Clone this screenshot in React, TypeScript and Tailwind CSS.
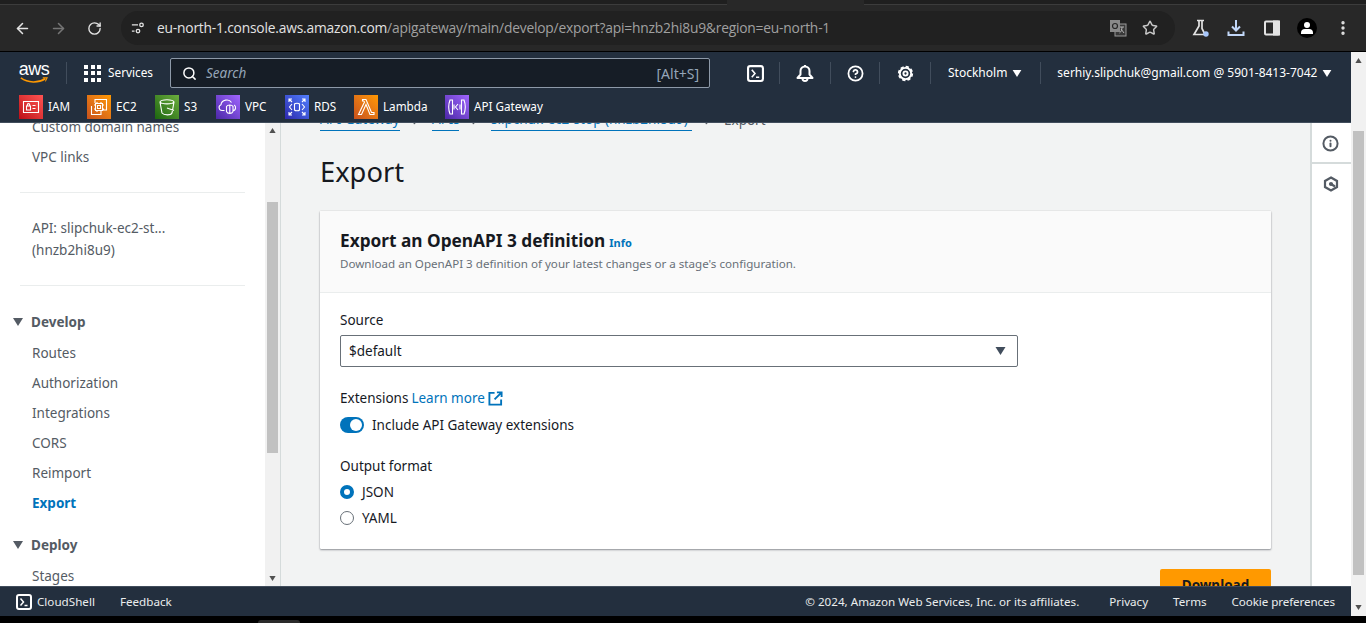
import { ArrowLeft, ArrowRight, RotateCw, Star, EllipsisVertical, Search, CircleHelp, Info, ChevronRight } from "lucide-react";

const FONT = "font-['Noto_Sans','Open_Sans',sans-serif]";

const SHORTCUTS = [
  { label: "IAM", bg: "from-[#bd0816] to-[#ff5252]", d: "M4.500 6.500h15v11h-15z M7.500 11h4v4h-4z M8.300 11V9.800a1.200 1.200 0 0 1 2.400 0V11 M13.500 10.500h3 M13.500 13.500h3", w: "w-[68px]" },
  { label: "EC2", bg: "from-[#c8511b] to-[#ff9900]", d: "M8 8V4.500h11.500V15H16 M4.500 11v8.500H14V16 M8.500 8.500h7v7h-7z M10.500 10.500h3v3h-3z M10 7v1.500 M14 7v1.500 M10 15.500V17 M14 15.500V17 M7 10h1.500 M7 14h1.500 M15.500 10H17 M15.500 14H17", w: "w-[68px]" },
  { label: "S3", bg: "from-[#1b660f] to-[#6cae3e]", d: "M5 7c1-3 13-3 14 0l-2 11c-1 2.500-8 2.500-10 0z M5 7c2 2.500 12 2.500 14 0 M12 13l7 2.500", w: "w-[61px]" },
  { label: "VPC", bg: "from-[#4d27a8] to-[#a166ff]", d: "M8.500 15.500H6a3 3 0 0 1-1-5.800c.5-5 8-6.500 10.500-2.200 M18 10c2.500 1 2 5.500-1 5.500 M10.500 11.500c1-2 5.500-2 6.500 0v5c-1 2.500-5.500 2.500-6.500 0z M13.800 9.500v9", w: "w-[69px]" },
  { label: "RDS", bg: "from-[#2e27ad] to-[#527fff]", d: "M9.500 9c1-1 4-1 5 0v6c-1 1-4 1-5 0z M7 9l-2.500 3L7 15 M17 9l2.500 3L17 15 M4 7V4h3 M20 7V4h-3 M4 17v3h3 M20 17v3h-3 M4 4l3 3 M20 4l-3 3 M4 20l3-3 M20 20l-3-3", w: "w-[69px]" },
  { label: "Lambda", bg: "from-[#c8511b] to-[#ff9900]", d: "M8.500 4.500h3.500l5.500 13h2.500v2h-4l-4-10-4.500 10H4.500l6-12.500-.8-1H8.500z", w: "w-[91px]" },
  { label: "API Gateway", bg: "from-[#4d27a8] to-[#a166ff]", d: "M5 5h2.500v14H5c-1.500-4-1.500-10 0-14z M19 5h-2.500v14H19c1.500-4 1.500-10 0-14z M13 9l-2.500 3 2.500 3 M9 9.500v5 M15 9.500v5", w: "" },
];

const DEVELOP = ["Routes", "Authorization", "Integrations", "CORS", "Reimport"];

function TerminalIcon({ className }: { className: string }) {
  return (
    <svg viewBox="0 0 16 16" fill="none" className={className}>
      <rect x="1" y="1" width="14" height="14" rx="2" stroke="white" strokeWidth="2" />
      <path d="M4.500 4.500 7.500 8l-3 3.500M8.500 11.500h3" stroke="white" strokeWidth="1.500" />
    </svg>
  );
}

function Caret({ className }: { className: string }) {
  return (
    <svg viewBox="0 0 10 8" className={className}>
      <path d="M0 0h10L5 8z" fill="currentColor" />
    </svg>
  );
}

function Divider({ className }: { className: string }) {
  return <div className={`w-px h-[22px] bg-[#414d5c] ${className}`} />;
}

function Scrollbar({ width, thumbTop, thumbHeight, arrowPad }: { width: string; thumbTop: string; thumbHeight: string; arrowPad: string }) {
  return (
    <div className={`${width} shrink-0 bg-[#f1f1f1] flex flex-col items-center ${arrowPad}`}>
      <Caret className="w-[9px] h-[5px] text-[#505050] rotate-180 shrink-0" />
      <div className={`w-full px-[2px] grow ${thumbTop}`}>
        <div className={`${thumbHeight} bg-[#c1c1c1]`} />
      </div>
      <Caret className="w-[9px] h-[5px] text-[#505050] shrink-0" />
    </div>
  );
}

function BrowserBar() {
  return (
    <div className="h-[52px] shrink-0 bg-[#1f1f1f] flex flex-col">
      <div className="h-[5px] flex">
        <div className="w-[727px] border-b border-[#3c3c3c]" />
        <div className="w-[137px] bg-[#282828]" />
        <div className="grow border-b border-[#3c3c3c] bg-[#1f1f1f]" />
      </div>
      <div className="grow bg-[#282828] flex items-center border-b border-black">
        <ArrowLeft className="ml-[14px] w-[17px] h-[17px] text-[#e3e3e3]" strokeWidth={2.2} />
        <ArrowRight className="ml-[19px] w-[17px] h-[17px] text-[#757575]" strokeWidth={2.2} />
        <RotateCw className="ml-[20px] w-[15px] h-[15px] text-[#e3e3e3]" strokeWidth={2.2} />
        <div className="ml-[19px] w-[1054px] h-[34px] rounded-full bg-[#212121] flex items-center pl-[10px] pr-[17px]">
          <svg viewBox="0 0 16 16" fill="none" className="w-[14px] h-[14px] text-[#e3e3e3] shrink-0" stroke="currentColor" strokeWidth="1.500">
            <path d="M1 4.500h7M1 11.500h3" />
            <circle cx="12" cy="4.500" r="2" />
            <circle cx="8" cy="11.500" r="2" />
          </svg>
          <span className="ml-[12px] font-['Open_Sans',sans-serif] text-[13.800px] tracking-[-0.2px] text-[#e3e3e3] whitespace-nowrap">
            eu-north-1.console.aws.amazon.com<span className="text-[#a0a0a0]">/apigateway/main/develop/export?api=hnzb2hi8u9&amp;region=eu-north-1</span>
          </span>
          <svg viewBox="0 0 18 18" className="ml-auto w-[18px] h-[18px]">
            <rect x="6" y="5" width="11" height="12" fill="#3a3a3a" stroke="#9a9a9a" strokeWidth="1" />
            <rect x="1" y="1" width="10" height="12" fill="#8a8a8a" />
            <circle cx="6" cy="7" r="2.500" fill="none" stroke="#282828" strokeWidth="1.200" />
            <path d="M11 8h4M13 8c0 3-1 5-2.500 6M12 10l3 4" fill="none" stroke="#b5b5b5" strokeWidth="1" />
          </svg>
          <Star className="ml-[15px] w-[16px] h-[16px] text-[#c7c7c7]" strokeWidth={2.2} />
        </div>
        <svg viewBox="0 0 18 18" fill="none" className="ml-[17px] w-[18px] h-[18px] text-[#e3e3e3]" stroke="currentColor" strokeWidth="1.700">
          <path d="M5 1.500h7M7 1.500v5.500L2 15.500h11L10 9.500V1.500" />
          <circle cx="14" cy="15" r="2.700" fill="#a8c7fa" stroke="none" />
        </svg>
        <svg viewBox="0 0 18 18" fill="none" className="ml-[17px] w-[18px] h-[18px] text-[#c2d7f8]" stroke="currentColor" strokeWidth="2">
          <path d="M9 1v10M5 7.500l4 4 4-4M1.500 12.500v3.500h15v-3.500" />
        </svg>
        <svg viewBox="0 0 16 16" className="ml-[19px] w-[16px] h-[16px] text-[#e3e3e3]" fill="none" stroke="currentColor" strokeWidth="2">
          <rect x="1" y="1.500" width="14" height="13" rx="1" />
          <path d="M10 1.500v13h5v-13z" fill="currentColor" />
        </svg>
        <div className="ml-[17px] w-[20px] h-[20px] rounded-full bg-black flex flex-col items-center justify-center">
          <div className="w-[6px] h-[6px] rounded-full bg-white" />
          <div className="w-[12px] h-[5px] mt-px rounded-t-[4px] bg-white" />
        </div>
        <EllipsisVertical className="ml-[17px] w-[18px] h-[18px] text-[#e3e3e3]" strokeWidth={2.5} />
      </div>
    </div>
  );
}

function TopNav() {
  return (
    <div className="h-[71px] shrink-0 bg-[#232f3e] text-white border-b border-[#414d5c]">
      <div className="h-[41px] flex items-center pt-px">
        <div className="ml-[18px] w-[32px] flex flex-col items-center leading-none">
          <span className="font-['Liberation_Sans',sans-serif] text-[18px] leading-[15px] tracking-[-0.5px]">aws</span>
          <svg viewBox="0 0 32 8" className="w-[32px] h-[7px]" fill="none">
            <path d="M1 1c8 6 20 6 28 1" stroke="#ff9900" strokeWidth="1.800" />
            <path d="M26 1h5l-2 4" stroke="#ff9900" strokeWidth="1.200" />
          </svg>
        </div>
        <Divider className="ml-[16px]" />
        <div className="ml-[17px] grid grid-cols-3 gap-[2.500px] w-[17px]">
          {Array.from({ length: 9 }).map((_, i) => (
            <div key={i} className="w-[4px] h-[4px] bg-white" />
          ))}
        </div>
        <span className="ml-[7px] text-[11.800px]">Services</span>
        <div className="ml-[17px] w-[540px] h-[30px] rounded-[2px] border border-[#8d99a8] bg-[#161d26] flex items-center pl-[11px] pr-[10px]">
          <Search className="w-[15px] h-[15px] text-white" strokeWidth={2.4} />
          <span className="ml-[9px] italic text-[13.500px] text-[#95a5b8]">Search</span>
          <span className="ml-auto text-[14px] text-[#95a5b8]">[Alt+S]</span>
        </div>
        <TerminalIcon className="ml-[37px] w-[17px] h-[17px]" />
        <Divider className="ml-[15px]" />
        <svg viewBox="0 0 18 18" fill="none" stroke="white" strokeWidth="2" className="ml-[16px] w-[18px] h-[18px]">
          <path d="M1.500 14 4.500 10.500V7a4.500 4.500 0 0 1 9 0v3.500L16.500 14z" strokeLinejoin="round" />
          <path d="M6.500 14.500a2.500 2.500 0 0 0 5 0" />
          <path d="M9 1v1.500" />
        </svg>
        <Divider className="ml-[16px]" />
        <CircleHelp className="ml-[16px] w-[17px] h-[17px]" strokeWidth={2.5} />
        <Divider className="ml-[15px]" />
        <svg viewBox="0 0 18 18" fill="none" stroke="white" className="ml-[17px] w-[17px] h-[17px]">
          <circle cx="9" cy="9" r="6" strokeWidth="2" />
          <circle cx="9" cy="9" r="7.200" strokeWidth="1.800" strokeDasharray="3.500 2.150" />
          <circle cx="9" cy="9" r="2.200" strokeWidth="2" />
        </svg>
        <Divider className="ml-[16px]" />
        <span className="ml-[17px] text-[12px]">Stockholm</span>
        <Caret className="ml-[5px] w-[10px] h-[7px]" />
        <Divider className="ml-[18px]" />
        <span className="ml-[16px] text-[12px] whitespace-nowrap">serhiy.slipchuk@gmail.com @ 5901-8413-7042</span>
        <Caret className="ml-[5px] w-[10px] h-[7px]" />
      </div>
      <div className="h-[29px] flex items-start pl-[19px] pt-[2px]">
        {SHORTCUTS.map((s) => (
          <div key={s.label} className={`flex items-center gap-[5px] ${s.w}`}>
            <div className={`w-[24px] h-[24px] bg-gradient-to-tr ${s.bg}`}>
              <svg viewBox="0 0 24 24" fill="none" stroke="white" strokeWidth="1.100" className="w-[24px] h-[24px]">
                <path d={s.d} />
              </svg>
            </div>
            <span className="text-[11.700px]">{s.label}</span>
          </div>
        ))}
      </div>
    </div>
  );
}

function SideNav() {
  return (
    <div className="w-[265px] shrink-0 bg-white overflow-hidden text-[13.500px] text-[#545b64]">
      <div className="-mt-[6px] pl-[32px] pr-[20px]">
        <div className="h-[20px] flex items-center">Custom domain names</div>
        <div className="h-[20px] mt-[10px] flex items-center">VPC links</div>
      </div>
      <div className="mx-[20px] mt-[25px] h-px bg-[#eaeded]" />
      <div className="pl-[32px] mt-[24px] leading-[22px]">
        <div>API: slipchuk-ec2-st...</div>
        <div>(hnzb2hi8u9)</div>
      </div>
      <div className="mx-[20px] mt-[24px] h-px bg-[#eaeded]" />
      <div className="mt-[26px] h-[20px] pl-[13px] flex items-center font-bold">
        <Caret className="w-[10px] h-[8px] mr-[8px]" />
        Develop
      </div>
      <div className="pl-[32px] mt-[11px] flex flex-col gap-[10px]">
        {DEVELOP.map((d) => (
          <div key={d} className="h-[20px] flex items-center">{d}</div>
        ))}
        <div className="h-[20px] flex items-center font-bold text-[#0073bb]">Export</div>
      </div>
      <div className="mt-[22px] h-[20px] pl-[13px] flex items-center font-bold">
        <Caret className="w-[10px] h-[8px] mr-[8px]" />
        Deploy
      </div>
      <div className="pl-[32px] mt-[11px] h-[20px] flex items-center">Stages</div>
    </div>
  );
}

function ExportCard() {
  return (
    <div className="w-[951px] bg-white rounded-[1px] shadow-[0_1px_2px_rgba(0,7,22,0.4),0_0_1px_rgba(0,7,22,0.3)]">
      <div className="h-[82px] bg-[#fafafa] border-b border-[#eaeded] pl-[20px] pt-[17px]">
        <div className="flex items-baseline gap-[4px]">
          <span className="text-[17.250px] leading-[26px] font-bold text-[#16191f]">Export an OpenAPI 3 definition</span>
          <span className="text-[11px] font-bold text-[#0073bb]">Info</span>
        </div>
        <div className="text-[11.600px] leading-[16px] mt-[2px] text-[#687078]">Download an OpenAPI 3 definition of your latest changes or a stage's configuration.</div>
      </div>
      <div className="h-[256px] pl-[20px] pt-[17px] text-[13.500px] text-[#16191f]">
        <div className="leading-[20px]">Source</div>
        <div className="mt-[5px] w-[678px] h-[32px] rounded-[2px] border border-[#687078] flex items-center pl-[8px] pr-[11px]">
          <span>$default</span>
          <Caret className="ml-auto w-[11px] h-[8px] text-[#414d5c]" />
        </div>
        <div className="mt-[21px] h-[20px] flex items-center gap-[3px]">
          <span>Extensions</span>
          <span className="text-[#0073bb]">Learn more</span>
          <svg viewBox="0 0 16 16" fill="none" stroke="#0073bb" strokeWidth="2" className="w-[15px] h-[15px]">
            <path d="M7 2H1.500v12.500H14V9" />
            <path d="M9.500 1.500H14.500V6.500M14 2 7 9" />
          </svg>
        </div>
        <div className="mt-[7px] h-[20px] flex items-center">
          <div className="w-[24px] h-[16px] rounded-full bg-[#0073bb] flex items-center justify-end pr-[2px]">
            <div className="w-[12px] h-[12px] rounded-full bg-white" />
          </div>
          <span className="ml-[8px]">Include API Gateway extensions</span>
        </div>
        <div className="mt-[21px] leading-[20px]">Output format</div>
        <div className="mt-[6px] h-[20px] flex items-center">
          <div className="w-[14px] h-[14px] rounded-full border-[4px] border-[#0073bb] bg-white" />
          <span className="ml-[8px]">JSON</span>
        </div>
        <div className="mt-[6px] h-[20px] flex items-center">
          <div className="w-[14px] h-[14px] rounded-full border border-[#687078] bg-white" />
          <span className="ml-[8px]">YAML</span>
        </div>
      </div>
    </div>
  );
}

function Main() {
  return (
    <div className="grow min-w-0 bg-[#f2f3f3] overflow-hidden pl-[39px]">
      <div className="-mt-[13px] h-[20px] flex items-center text-[13.500px] text-[#545b64] whitespace-nowrap">
        <span className="w-[80px] text-[#0073bb] border-b border-[#0073bb]">API Gateway</span>
        <span className="w-[32px] flex justify-center"><ChevronRight className="w-[14px] h-[14px]" strokeWidth={2.4} /></span>
        <span className="w-[27px] text-[#0073bb] border-b border-[#0073bb]">APIs</span>
        <span className="w-[32px] flex justify-center"><ChevronRight className="w-[14px] h-[14px]" strokeWidth={2.4} /></span>
        <span className="w-[201px] text-[#0073bb] border-b border-[#0073bb]">slipchuk-ec2-stop (hnzb2hi8u9)</span>
        <span className="w-[32px] flex justify-center"><ChevronRight className="w-[14px] h-[14px]" strokeWidth={2.4} /></span>
        <span>Export</span>
      </div>
      <h1 className="mt-[24px] text-[27.300px] leading-[36px] text-[#16191f]">Export</h1>
      <div className="mt-[21px]">
        <ExportCard />
      </div>
      <div className="mt-[20px] w-[951px] flex justify-end">
        <div className="w-[111px] h-[32px] rounded-[2px] bg-[#ff9900] flex items-center justify-center text-[13.500px] font-bold text-[#16191f]">Download</div>
      </div>
    </div>
  );
}

function RightRail() {
  return (
    <div className="w-[41px] shrink-0 bg-white border-l-2 border-[#d5dbdb] flex flex-col text-[#545b64]">
      <div className="h-[41px] border-b-2 border-[#d5dbdb] flex items-center justify-center pr-[2px] pt-px">
        <Info className="w-[17px] h-[17px]" strokeWidth={2.8} />
      </div>
      <div className="mt-[12px] flex justify-center pr-[2px]">
        <svg viewBox="0 0 16 16" fill="none" stroke="currentColor" strokeWidth="2.200" className="w-[16px] h-[16px]">
          <path d="M8 1.500 14 5v6l-6 3.500L2 11V5z" />
          <circle cx="8" cy="8" r="1" fill="currentColor" />
          <path d="M8 8l4 2.500" />
        </svg>
      </div>
    </div>
  );
}

function Footer() {
  return (
    <div className="h-[30px] shrink-0 bg-[#232f3e] border-t border-[#414d5c] flex items-center text-[11.650px] text-[#eaeded] pr-[16px]">
      <TerminalIcon className="ml-[16px] w-[16px] h-[16px]" />
      <span className="ml-[5px]">CloudShell</span>
      <span className="ml-[25px]">Feedback</span>
      <span className="ml-auto">© 2024, Amazon Web Services, Inc. or its affiliates.</span>
      <span className="ml-[30px]">Privacy</span>
      <span className="ml-[25px]">Terms</span>
      <span className="ml-[25px] tracking-[-0.1px]">Cookie preferences</span>
    </div>
  );
}

export default function App() {
  return (
    <div className={`h-[623px] w-[1366px] overflow-hidden flex flex-col bg-black ${FONT}`}>
      <BrowserBar />
      <div className="h-[564px] flex shrink-0">
        <div className="w-[1351px] shrink-0 flex flex-col">
          <TopNav />
          <div className="grow min-h-0 flex">
            <SideNav />
            <Scrollbar width="w-[15px]" thumbTop="mt-[69px]" thumbHeight="h-[251px]" arrowPad="py-[5px]" />
            <div className="w-px bg-[#d5dbdb] shrink-0" />
            <Main />
            <RightRail />
          </div>
          <Footer />
        </div>
        <Scrollbar width="w-[15px]" thumbTop="mt-[68px]" thumbHeight="h-[444px]" arrowPad="py-[6px]" />
      </div>
      <div className="grow pl-[258px] pt-[4px]">
        <div className="w-[42px] h-[3px] rounded-t-[3px] bg-[#2a2a2a]" />
      </div>
    </div>
  );
}
